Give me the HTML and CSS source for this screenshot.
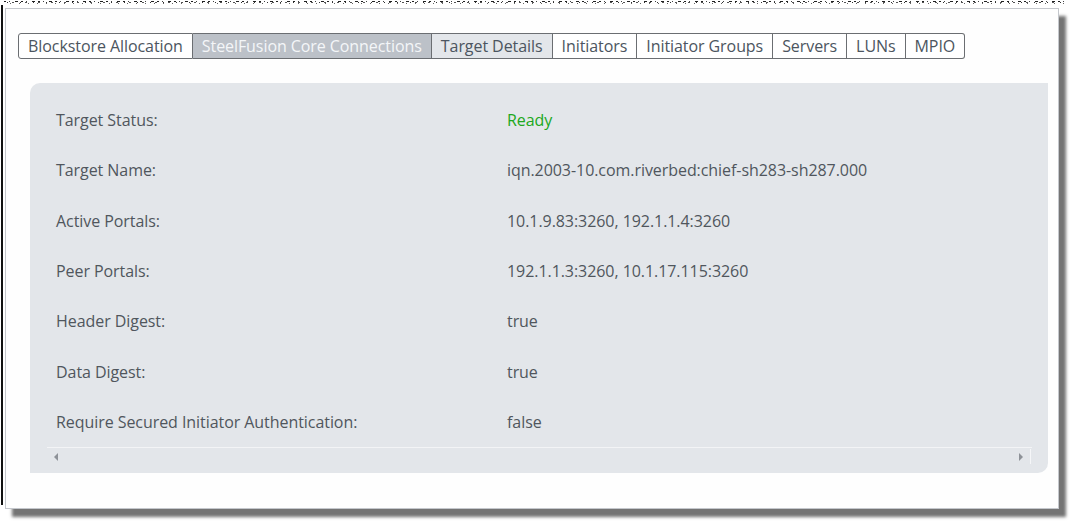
FILE: index.html
```html
<!DOCTYPE html>
<html>
<head>
<meta charset="utf-8">
<link rel="stylesheet" href="styles.css">
</head>
<body>
<div class="torn"></div>
<div class="sheet">
  <div class="panel">
    <div class="tabs">
      <div class="tab first">Blockstore Allocation</div>
      <div class="tab active">SteelFusion Core Connections</div>
      <div class="tab hover">Target Details</div>
      <div class="tab">Initiators</div>
      <div class="tab">Initiator Groups</div>
      <div class="tab">Servers</div>
      <div class="tab">LUNs</div>
      <div class="tab last">MPIO</div>
    </div>
    <div class="content">
      <div class="rows">
        <div class="row"><div class="label">Target Status:</div><div class="value ok">Ready</div></div>
        <div class="row"><div class="label">Target Name:</div><div class="value">iqn.2003-10.com.riverbed:chief-sh283-sh287.000</div></div>
        <div class="row"><div class="label">Active Portals:</div><div class="value">10.1.9.83:3260, 192.1.1.4:3260</div></div>
        <div class="row"><div class="label">Peer Portals:</div><div class="value">192.1.1.3:3260, 10.1.17.115:3260</div></div>
        <div class="row"><div class="label">Header Digest:</div><div class="value">true</div></div>
        <div class="row"><div class="label">Data Digest:</div><div class="value">true</div></div>
        <div class="row"><div class="label">Require Secured Initiator Authentication:</div><div class="value">false</div></div>
      </div>
      <div class="scrollbar">
        <span class="arrow left"></span>
        <span class="arrow right"></span>
        <span class="thumbend"></span>
      </div>
    </div>
  </div>
</div>
</body>
</html>
```
FILE: styles.css
```css
html, body {
  margin: 0;
  padding: 0;
  background: #ffffff;
  font-family: "Open Sans", "Liberation Sans", sans-serif;
  width: 1070px;
  height: 523px;
  overflow: hidden;
}

.torn {
  height: 5px;
  margin: 0 6px 0 4px;
  background:
    repeating-linear-gradient(90deg, #222 0 2px, transparent 2px 5px, #444 5px 6px, transparent 6px 11px, #222 11px 14px, transparent 14px 17px) 0 1px / 100% 1px no-repeat,
    repeating-linear-gradient(90deg, transparent 0 3px, #333 3px 4px, transparent 4px 8px, #555 8px 10px, transparent 10px 13px) 0 2px / 100% 1px no-repeat,
    repeating-linear-gradient(90deg, transparent 0 6px, #666 6px 7px, transparent 7px 9px) 0 3px / 100% 1px no-repeat;
}

.sheet {
  margin-left: 1px;
  border-left: 2px solid #111;
  padding: 3px 0 0 2px;
  height: 500px;
  box-sizing: border-box;
  width: 1060px;
}

.panel {
  width: 1054px;
  height: 501px;
  box-sizing: border-box;
  border: 1px solid #c4c7cc;
  background: #fefefe;
  padding: 24px 10px 0 12px;
  box-shadow: 7px 8px 3px rgba(70, 70, 70, 0.75);
}

.tabs {
  display: flex;
  height: 26px;
}

.tab {
  height: 26px;
  box-sizing: border-box;
  border: 1px solid #6b6e72;
  border-left: none;
  padding: 0 9px;
  font-size: 16px;
  letter-spacing: -0.07px;
  line-height: 24px;
  color: #4c5560;
  background: #ffffff;
  white-space: nowrap;
}

.tab.first {
  border-left: 1px solid #6b6e72;
  border-radius: 3px 0 0 3px;
}

.tab.last {
  border-radius: 0 3px 3px 0;
}

.tab.active {
  background: #bcc1c8;
  color: #f4f6f8;
}

.tab.hover {
  background: #e3e6ea;
}

.content {
  margin: 24px 0 0 12px;
  height: 390px;
  background: #e3e6ea;
  border-radius: 10px 0 10px 0;
  padding: 12px 0 0 17px;
  box-sizing: border-box;
}

.rows {
  display: flex;
  flex-direction: column;
  padding-left: 9px;
}

.row {
  display: flex;
  height: 50.3px;
  align-items: center;
  font-size: 16px;
  letter-spacing: -0.06px;
  color: #50565d;
}

.label {
  width: 451px;
  flex: none;
}

.value.ok {
  color: #20a820;
}

.scrollbar {
  position: relative;
  margin-top: 0;
  width: 985px;
  height: 19px;
  border-top: 1px solid #f3f4f6;
}

.arrow {
  position: absolute;
  top: 5px;
  width: 0;
  height: 0;
  border-top: 4px solid transparent;
  border-bottom: 4px solid transparent;
}

.arrow.left {
  left: 7px;
  border-right: 4px solid #8e9298;
}

.arrow.right {
  right: 9px;
  border-left: 4px solid #8e9298;
}

.thumbend {
  position: absolute;
  right: 1px;
  top: 1px;
  width: 1px;
  height: 15px;
  background: #f5f6f8;
}
```
